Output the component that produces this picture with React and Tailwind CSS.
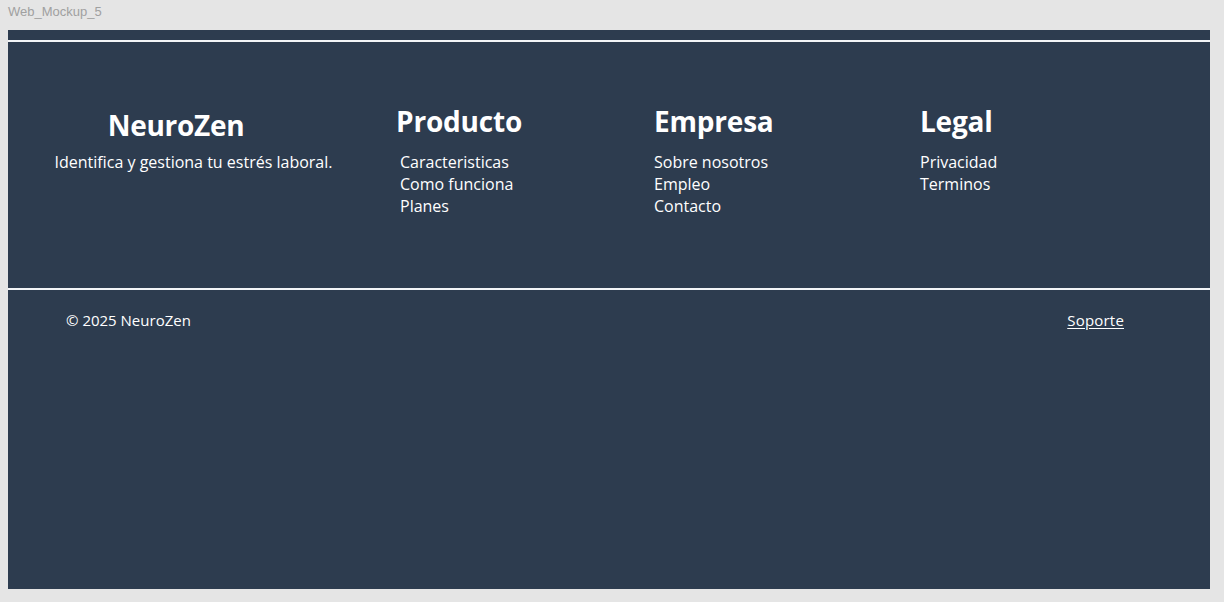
// Footer mockup: marca, columnas de enlaces y barra inferior

const font = { fontFamily: '"Open Sans", "Noto Sans", sans-serif' };

// ─── Datos ────────────────────────────────────────────────────────────────────
const columns = [
  {
    title: "Producto",
    links: ["Caracteristicas", "Como funciona", "Planes"],
    w: "w-[258px]",
    indent: "pl-[4px]",
  },
  {
    title: "Empresa",
    links: ["Sobre nosotros", "Empleo", "Contacto"],
    w: "w-[266px]",
    indent: "",
  },
  {
    title: "Legal",
    links: ["Privacidad", "Terminos"],
    w: "w-[200px]",
    indent: "",
  },
];

function Column({ title, links, w, indent }) {
  return (
    <div className={`${w} flex flex-col`}>
      <h3 className="text-[28px] leading-[34px] font-bold text-white tracking-[-0.2px]">
        {title}
      </h3>
      <ul className={`mt-[13px] flex flex-col ${indent}`}>
        {links.map((l) => (
          <li key={l} className="text-[16px] leading-[22px] text-white">
            {l}
          </li>
        ))}
      </ul>
    </div>
  );
}

export default function App() {
  return (
    <div className="min-h-[602px] bg-[#e5e5e5] flex flex-col" style={font}>
      {/* Frame label */}
      <div className="h-[30px] pl-[8px] pt-[3px] text-[13px] leading-[18px] text-[#a0a0a0]"
           style={{ fontFamily: '"Liberation Sans", Arial, sans-serif' }}>
        Web_Mockup_5
      </div>

      {/* Frame */}
      <div className="ml-[8px] w-[1202px] h-[559px] bg-[#2d3c4f] flex flex-col">
        <div className="h-[10px]" />
        <div className="h-[2px] bg-[#f2f4f7]" />

        {/* Main footer */}
        <div className="h-[246px] flex pt-[62px]">
          <div className="w-[388px] flex flex-col items-center pr-[17px]">
            <h2 className="mt-[2px] text-[28px] leading-[38px] font-bold text-white ml-[-35px] tracking-[-0.3px]">
              NeuroZen
            </h2>
            <p className="mt-[8px] text-[16px] leading-[20px] text-white">
              Identifica y gestiona tu estrés laboral.
            </p>
          </div>
          {columns.map((c) => (
            <Column key={c.title} {...c} />
          ))}
        </div>

        <div className="h-[2px] bg-[#f2f4f7]" />

        {/* Bottom bar */}
        <div className="flex justify-between pl-[58px] pr-[86px] pt-[20px]">
          <span className="text-[15px] leading-[20px] text-white">© 2025 NeuroZen</span>
          <a href="#" className="text-[15px] leading-[20px] text-white underline underline-offset-2 tracking-[0.2px]">
            Soporte
          </a>
        </div>
      </div>
    </div>
  );
}
